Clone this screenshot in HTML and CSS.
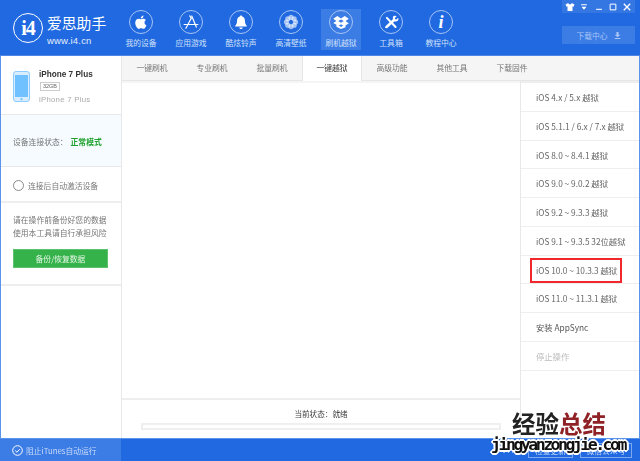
FILE: index.html
```html
<!DOCTYPE html>
<html lang="zh">
<head>
<meta charset="utf-8">
<title>爱思助手</title>
<link rel="stylesheet" href="styles.css">
</head>
<body>
<div class="window">
  <header class="topbar">
    <div class="logo">
      <div class="logo-mark">
        <span class="logo-i">i4</span>
      </div>
      <div class="logo-text">
        <div class="logo-name">爱思助手</div>
        <div class="logo-url">www.i4.cn</div>
      </div>
    </div>
    <nav class="nav">
      <div class="nav-item"><span class="nav-icon"><svg viewBox="0 0 24 24"><path fill="#fff" d="M15.800 12.700c0-1.800 1.500-2.700 1.600-2.800-.9-1.300-2.200-1.500-2.700-1.500-1.200-.1-2.200.7-2.800.7-.6 0-1.500-.7-2.500-.7-1.300 0-2.500.8-3.100 1.900-1.300 2.300-.3 5.600 1 7.400.6.900 1.400 1.900 2.300 1.800 1 0 1.300-.6 2.500-.6s1.500.6 2.500.6 1.700-.9 2.300-1.800c.7-1 1-2 1.100-2.100-.1 0-2.200-.8-2.200-2.900zM13.900 7.300c.5-.7.900-1.500.8-2.400-.8 0-1.600.5-2.100 1.100-.5.500-.9 1.400-.8 2.200.8.100 1.600-.4 2.100-.9z"/></svg></span><span class="nav-label">我的设备</span></div>
      <div class="nav-item"><span class="nav-icon"><svg viewBox="0 0 24 24"><path fill="none" stroke="#fff" stroke-width="1.300" stroke-linecap="round" d="M12 8.500L7.200 17.500M12.800 5.500l5 12M10.700 5.300l1.700 3M4.500 14.700h15M6.300 18.800l.9-1.300"/></svg></span><span class="nav-label">应用游戏</span></div>
      <div class="nav-item"><span class="nav-icon"><svg viewBox="0 0 24 24"><path fill="#fff" d="M12 5c-.8 0-1.200.5-1.200 1.100C8.700 6.700 7.700 8.500 7.700 10.500c0 3-1 4.300-2 5.500v1h12.600v-1c-1-1.200-2-2.500-2-5.500 0-2-1-3.800-3.100-4.400C13.200 5.500 12.800 5 12 5zM10 18c.2 1 1 1.700 2 1.700s1.800-.7 2-1.700z"/></svg></span><span class="nav-label">酷炫铃声</span></div>
      <div class="nav-item"><span class="nav-icon"><svg viewBox="0 0 24 24"><g fill="#fff" fill-opacity=".6"><circle cx="12" cy="7" r="2.800"/><circle cx="12" cy="17" r="2.800"/><circle cx="7" cy="12" r="2.800"/><circle cx="17" cy="12" r="2.800"/><circle cx="8.500" cy="8.500" r="2.800"/><circle cx="15.500" cy="8.500" r="2.800"/><circle cx="8.500" cy="15.500" r="2.800"/><circle cx="15.500" cy="15.500" r="2.800"/></g></svg></span><span class="nav-label">高清壁纸</span></div>
      <div class="nav-item nav-active"><span class="nav-icon"><svg viewBox="0 0 24 24"><path fill="#fff" fill-rule="evenodd" d="M8 5.500l4 2.600 4-2.600 4.500 3-3.500 2.500 3.500 2.500-3.500 2.100v2L12 19.500l-5-2.400v-2l-3.500-2.100L7 11 3.500 8.500zM12 9.200L9 11l3 1.900L15 11zM12 14.500l-2 1.400-1.300-.7 3.300 2.300 3.300-2.300-1.300.7z"/></svg></span><span class="nav-label">刷机越狱</span></div>
      <div class="nav-item"><span class="nav-icon"><svg viewBox="0 0 24 24"><path fill="none" stroke="#fff" stroke-width="2.200" stroke-linecap="round" d="M7.500 7.500l9.500 10"/><path fill="#fff" d="M15 5.500c1.200-.6 2.500-.4 3.200.2l-2 2 .3 1.200 1.300.3 2-1.900c.5 1.200.2 2.500-.6 3.300-.9.800-2.100 1-3.100.6L8 18.500c-.6.600-1.500.6-2 0-.6-.6-.6-1.400 0-2l8.200-7.900c-.4-1.100-.2-2.300.8-3.100z"/></svg></span><span class="nav-label">工具箱</span></div>
      <div class="nav-item"><span class="nav-icon"><span class="info-i">i</span></span><span class="nav-label">教程中心</span></div>
    </nav>
    <div class="top-right">
      <div class="win-controls">
        <svg class="win-icon" viewBox="0 0 14 14"><path fill="#fff" d="M4.500 1.500L.8 3.500l1.200 3 1.500-.5v6.500h7V6l1.500.5 1.200-3-3.700-2-1 1.500h-3z"/></svg>
        <svg class="win-icon" viewBox="0 0 14 14"><path fill="#fff" d="M3 3h8v1.500H3zM3.500 6.500h7L7 11z"/></svg>
        <svg class="win-icon" viewBox="0 0 14 14"><path fill="#fff" d="M3 9.500h8V11H3z"/></svg>
        <svg class="win-icon" viewBox="0 0 14 14"><path fill="none" stroke="#fff" stroke-width="1.400" d="M3 3h8v8H3z"/></svg>
        <svg class="win-icon" viewBox="0 0 14 14"><path fill="none" stroke="#fff" stroke-width="1.800" d="M2.500 2.500l9 9M11.500 2.500l-9 9"/></svg>
      </div>
      <div class="download-btn">下载中心
        <svg class="dl-icon" viewBox="0 0 10 10"><path fill="#a9c6f5" d="M3.500 0h3v4h2.500L5 7.500 1 4h2.500zM1 8.500h8V10H1z"/></svg>
      </div>
    </div>
  </header>

  <div class="body">
    <aside class="sidebar">
      <section class="device">
        <svg class="phone" viewBox="0 0 17 31"><rect x=".5" y=".5" width="16" height="30" rx="2.500" fill="#d8edff" stroke="#8ecbff"/><rect x="2" y="4" width="13" height="22" fill="#6fc1ff"/><circle cx="8.500" cy="28.200" r="1.100" fill="#6fc1ff"/></svg>
        <div class="device-info">
          <div class="device-name">iPhone 7 Plus</div>
          <div class="device-badge">32GB</div>
          <div class="device-model">iPhone 7 Plus</div>
        </div>
      </section>
      <section class="status">设备连接状态：<span class="status-ok">正常模式</span></section>
      <section class="activate"><span class="radio"></span>连接后自动激活设备</section>
      <section class="notice">
        <p>请在操作前备份好您的数据</p>
        <p>使用本工具请自行承担风险</p>
        <div class="backup-btn">备份/恢复数据</div>
      </section>
    </aside>

    <main class="content">
      <div class="tabs">
        <div class="tab">一键刷机</div>
        <div class="tab">专业刷机</div>
        <div class="tab">批量刷机</div>
        <div class="tab tab-active">一键越狱</div>
        <div class="tab">高级功能</div>
        <div class="tab">其他工具</div>
        <div class="tab">下载固件</div>
      </div>
      <div class="workspace">
        <div class="center">
          <div class="canvas"></div>
          <div class="state">
            <div class="state-text">当前状态：就绪</div>
            <div class="progress"></div>
          </div>
        </div>
        <div class="options">
          <div class="option">iOS 4.x / 5.x 越狱</div>
          <div class="option">iOS 5.1.1 / 6.x / 7.x 越狱</div>
          <div class="option">iOS 8.0 ~ 8.4.1 越狱</div>
          <div class="option">iOS 9.0 ~ 9.0.2 越狱</div>
          <div class="option">iOS 9.2 ~ 9.3.3 越狱</div>
          <div class="option">iOS 9.1 ~ 9.3.5 32位越狱</div>
          <div class="option option-marked">iOS 10.0 ~ 10.3.3 越狱</div>
          <div class="option">iOS 11.0 ~ 11.3.1 越狱</div>
          <div class="option option-dark">安装 AppSync</div>
          <div class="option option-disabled">停止操作</div>
        </div>
      </div>
    </main>
  </div>

  <footer class="footer">
    <div class="itunes">
      <svg class="check" viewBox="0 0 11 11"><circle cx="5.500" cy="5.500" r="4.800" fill="none" stroke="#fff"/><path fill="none" stroke="#fff" d="M3.200 5.600l1.700 1.600 2.900-3"/></svg>
      阻止iTunes自动运行
    </div>
    <div class="footer-right">
      <span class="version">V7.62</span>
      <span class="foot-btn foot-update">检查更新</span>
      <span class="foot-btn foot-wechat">微信公众号</span>
    </div>
  </footer>

  <div class="watermark">
    <div class="wm-cn">经验<span class="wm-red">总结</span></div>
    <div class="wm-url">jingyanzongjie.com</div>
  </div>
</div>
</body>
</html>
```
FILE: styles.css
```css
* { box-sizing: border-box; }
html, body { margin: 0; padding: 0; }
body {
  width: 640px;
  height: 461px;
  overflow: hidden;
  background: #fff;
  font-family: "Noto Sans CJK SC", "Liberation Sans", sans-serif;
  font-size: 7.8px;
  color: #777;
}
.window {
  position: relative;
  width: 640px;
  height: 461px;
  display: flex;
  flex-direction: column;
  border-left: 1px solid #5a93ec;
  border-right: 1px solid #5a93ec;
  filter: blur(.3px);
}
.topbar {
  height: 56px;
  margin: 0 -1px;
  flex: none;
  display: flex;
  background: #2069e0;
  color: #fff;
  border-bottom: 1px solid #4d88e8;
}
.logo {
  width: 116px;
  flex: none;
  display: flex;
  padding: 13px 0 0 13px;
  gap: 4px;
}
.logo-mark {
  width: 30px;
  height: 30px;
  border: 1.500px solid #fff;
  border-radius: 50%;
  display: flex;
  align-items: center;
  justify-content: center;
}
.logo-i {
  font: 700 20px/1 "Liberation Serif", serif;
  letter-spacing: -1px;
}
.logo-text { padding-top: 1px; }
.logo-name { font-size: 14.800px; line-height: 17px; width: 62px; white-space: nowrap; }
.logo-url { font: 9.500px/11px "Liberation Sans", sans-serif; margin-top: 4px; letter-spacing: .2px; color: #e4eefc; }

.nav { display: flex; padding-top: 9px; height: 50px; }
.nav-item {
  width: 50px;
  display: flex;
  flex-direction: column;
  align-items: center;
  position: relative;
  font-size: 7.800px;
  color: #cfe0fa;
}
.nav-active::before {
  content: "";
  position: absolute;
  left: 5px;
  top: 0;
  width: 40px;
  height: 41px;
  background: #3c7ce5;
}
.nav-icon {
  position: relative;
  width: 24px;
  height: 24px;
  border: 1px solid #a7c5f5;
  border-radius: 50%;
  display: flex;
  align-items: center;
  justify-content: center;
  margin-top: 1px;
}
.nav-icon svg { width: 22px; height: 22px; display: block; }
.info-i { font: italic 700 18px/1 "Liberation Serif", serif; color: #fff; }
.nav-label { position: relative; margin-top: 3px; line-height: 11px; white-space: nowrap; }

.top-right {
  margin-left: auto;
  width: 78px;
  padding-right: 5px;
  display: flex;
  flex-direction: column;
}
.win-controls {
  height: 13px;
  display: flex;
  justify-content: space-between;
  align-items: center;
  background: #3477e3;
  padding: 0 3px;
}
.win-icon { width: 10px; height: 10px; display: block; }
.download-btn {
  margin-top: 13px;
  height: 18px;
  background: #3c7ce5;
  display: flex;
  align-items: center;
  justify-content: center;
  gap: 6px;
  font-size: 7.800px;
  color: #a9c6f5;
}
.dl-icon { width: 7px; height: 7px; display: block; }

.body { flex: 1; display: flex; min-height: 0; background: #fff; }
.sidebar {
  width: 121px;
  flex: none;
  border-right: 1px solid #e8e8e8;
  display: flex;
  flex-direction: column;
}
.device {
  height: 59px;
  border-bottom: 1px solid #e8e8e8;
  display: flex;
  padding: 15px 0 0 12px;
  gap: 9px;
}
.phone { width: 17px; height: 31px; display: block; }
.device-name { font: 700 8.200px/10px "Liberation Sans", sans-serif; color: #333; margin-top: -1px; }
.device-badge {
  width: 20px;
  height: 9px;
  margin: 2px 0 0 1px;
  border: 1px solid #ccc;
  font: 5.500px/7px "Liberation Sans", sans-serif;
  text-align: center;
  color: #666;
}
.device-model { font: 7.800px/11px "Liberation Sans", sans-serif; color: #aaa; margin-top: 3px; letter-spacing: .25px; }
.status {
  height: 52px;
  background: #f5fbfe;
  border-bottom: 1px solid #e8e8e8;
  display: flex;
  align-items: center;
  padding: 2px 0 0 12px;
  white-space: nowrap;
}
.status-ok { color: #1fa12e; font-weight: 700; margin-left: 3px; }
.activate {
  height: 36px;
  border-bottom: 2px solid #eee;
  display: flex;
  align-items: center;
  padding: 2px 0 0 12px;
  gap: 4px;
}
.radio {
  width: 11px;
  height: 11px;
  border: 1px solid #888;
  border-radius: 50%;
}
.notice {
  height: 83px;
  padding: 10px 0 0 12px;
  border-bottom: 2px solid #eee;
}
.notice p { margin: 0; line-height: 13px; }
.backup-btn {
  width: 95px;
  height: 19px;
  margin-top: 10px;
  background: #35b34a;
  color: #e4f6e6;
  display: flex;
  align-items: center;
  justify-content: center;
  border: 1px solid #5cc26d;
}

.content { flex: 1; min-width: 0; display: flex; flex-direction: column; }
.tabs {
  height: 25px;
  flex: none;
  display: flex;
  background: #f5f5f5;
  border-bottom: 1px solid #e6e6e6;
}
.tab {
  width: 60px;
  text-align: center;
  line-height: 24px;
  color: #777;
}
.tab-active {
  background: #fff;
  color: #333;
  height: 25px;
  border-left: 1px solid #e6e6e6;
  border-right: 1px solid #e6e6e6;
}
.workspace { flex: 1; display: flex; min-height: 0; }
.center {
  flex: 1;
  min-width: 0;
  display: flex;
  flex-direction: column;
  background: #f5f5f5;
  padding-top: 2px;
}
.canvas { flex: 1; background: #fff; border-bottom: 2px solid #eee; }
.state {
  height: 38px;
  flex: none;
  background: #fff;
  display: flex;
  flex-direction: column;
  align-items: center;
}
.state-text { margin-top: 8px; line-height: 11px; color: #444; font-size: 7.600px; }
.progress {
  width: 360px;
  height: 7px;
  margin-top: 4px;
  border: 2px solid #efefef;
}
.options {
  width: 119px;
  flex: none;
  border-left: 1px solid #e8e8e8;
  border-top: 2px solid #eee;
  display: flex;
  flex-direction: column;
}
.option {
  height: 28.750px;
  flex: none;
  line-height: 28px;
  border-bottom: 1px solid #eee;
  padding-left: 15px;
  font-size: 8.300px;
  white-space: nowrap;
  color: #666;
  position: relative;
}
.option-marked::after {
  content: "";
  position: absolute;
  left: 9px;
  top: 2px;
  width: 88px;
  height: 21px;
  border: 2px solid #f0272c;
}
.option-dark { color: #555; }
.option-disabled { color: #bbb; }

.footer {
  height: 23px;
  flex: none;
  margin: 0 -1px;
  display: flex;
  background: #2069e0;
  border-top: 1px solid #5a93ec;
  color: #c9dcf9;
}
.itunes {
  width: 121px;
  background: #3c7ce5;
  display: flex;
  align-items: center;
  padding-left: 12px;
  gap: 3px;
  white-space: nowrap;
}
.check { width: 11px; height: 11px; display: block; }
.footer-right {
  margin-left: auto;
  display: flex;
  align-items: center;
  padding-right: 8px;
}
.version { margin-right: 6px; font-family: "Liberation Sans", sans-serif; }
.foot-btn {
  height: 15px;
  line-height: 13px;
  border: 1px solid #7ea7ee;
  text-align: center;
}
.foot-update { width: 45px; margin-right: 7px; }
.foot-wechat { width: 52px; }

.watermark {
  position: absolute;
  left: 477px;
  top: 411px;
  width: 160px;
  text-align: center;
  pointer-events: none;
}
.wm-cn {
  font-size: 23.500px;
  line-height: 25px;
  font-weight: 700;
  color: #222;
  padding-left: 2px;
  text-shadow: 1px 0 0 #fff, -1px 0 0 #fff, 0 1px 0 #fff, 0 -1px 0 #fff;
}
.wm-red { color: #8f2226; }
.wm-url {
  font: 700 16.500px/17px "DejaVu Sans Mono", "Liberation Mono", monospace;
  letter-spacing: -2.500px;
  color: #111;
  text-shadow: 2px 0 0 #fff, -2px 0 0 #fff, 0 2px 0 #fff, 0 -2px 0 #fff, 1px 1px 0 #fff, -1px -1px 0 #fff, 1px -1px 0 #fff, -1px 1px 0 #fff;
}
```
